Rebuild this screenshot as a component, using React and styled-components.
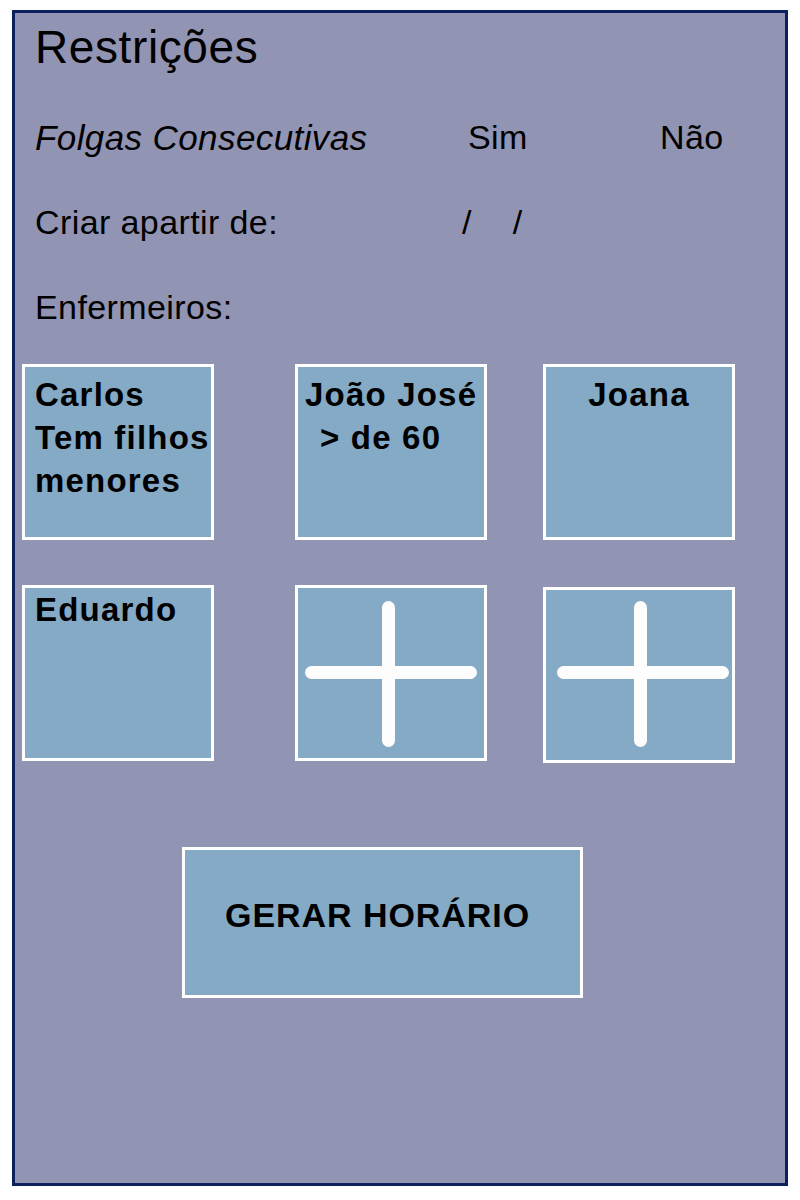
import React from 'react';
import styled, { createGlobalStyle } from 'styled-components';

const GlobalStyle = createGlobalStyle`
  body {
    margin: 0;
    background: #ffffff;
    font-family: 'Liberation Sans', Arial, sans-serif;
    color: #000000;
  }
`;

const nurses = [
  { id: 'carlos', lines: ['Carlos', 'Tem filhos', 'menores'], pad: '6px 0 0 10px' },
  { id: 'joao', lines: ['João José', '> de 60'], pad: '6px 0 0 7px', indent: true },
  { id: 'joana', lines: ['Joana'], pad: '6px 0 0 0', center: true },
  { id: 'eduardo', lines: ['Eduardo'], pad: '0 0 0 10px' },
];

const PlusIcon = ({ dx = 0, dy = 0 }) => (
  <PlusSvg viewBox="0 0 186 170">
    <g transform={`translate(${dx} ${dy})`}>
      <line x1="13.5" y1="84.5" x2="172.5" y2="84.5" />
      <line x1="90.5" y1="19.5" x2="90.5" y2="152.5" />
    </g>
  </PlusSvg>
);

const App = () => {
  return (
    <>
      <GlobalStyle />
      <Page>
        <Frame>
          <Title>Restrições</Title>

          <ChoiceRow>
            <em>Folgas Consecutivas</em>
            <span>Sim</span>
            <span>Não</span>
          </ChoiceRow>

          <DateRow>
            <span>Criar apartir de:</span>
            <DateSlots>
              <span>/</span>
              <span>/</span>
            </DateSlots>
          </DateRow>

          <Row>Enfermeiros:</Row>

          <CardGrid>
            {nurses.map((n) => (
              <Card key={n.id} $pad={n.pad} $center={n.center}>
                {n.lines.map((line, i) => (
                  <CardLine key={line} $indent={n.indent && i > 0}>
                    {line}
                  </CardLine>
                ))}
              </Card>
            ))}
            <Card>
              <PlusIcon />
            </Card>
            <Card $drop>
              <PlusIcon dx={4} dy={-2} />
            </Card>
          </CardGrid>

          <Footer>
            <GenerateButton>GERAR HORÁRIO</GenerateButton>
          </Footer>
        </Frame>
      </Page>
    </>
  );
};

export default App;

const Page = styled.div`
  padding: 10px 12px;
`;

const Frame = styled.div`
  box-sizing: border-box;
  width: 776px;
  height: 1176px;
  border: 3px solid #0b215e;
  background: #9194b2;
  padding-top: 9px;
`;

const Title = styled.h1`
  margin: 0;
  padding-left: 20px;
  height: 50px;
  line-height: 50px;
  font-size: 46px;
  font-weight: normal;
  letter-spacing: 0.6px;
`;

const Row = styled.div`
  height: 85px;
  line-height: 85px;
  padding-left: 20px;
  font-size: 34px;
  letter-spacing: 0.4px;
`;

const ChoiceRow = styled(Row)`
  margin-top: 23px;
  display: grid;
  grid-template-columns: 433px 192px auto;

  em {
    font-size: 35px;
  }
`;

const DateRow = styled(Row)`
  display: grid;
  grid-template-columns: 427px auto;
`;

const DateSlots = styled.div`
  display: flex;
  gap: 41px;
`;

const CardGrid = styled.div`
  margin-top: 14px;
  padding-left: 7px;
  display: grid;
  grid-template-columns: 273px 248px 192px;
  row-gap: 45px;
`;

const Card = styled.div`
  box-sizing: border-box;
  width: 192px;
  height: 176px;
  border: 3px solid #ffffff;
  background: #85aac6;
  padding: ${(p) => p.$pad || '0'};
  text-align: ${(p) => (p.$center ? 'center' : 'left')};
  margin-top: ${(p) => (p.$drop ? '2px' : '0')};
  margin-bottom: ${(p) => (p.$drop ? '-2px' : '0')};
  font-size: 33px;
  font-weight: bold;
  letter-spacing: 1.2px;
  line-height: 43px;
  white-space: nowrap;
  overflow: hidden;
`;

const CardLine = styled.div`
  padding-left: ${(p) => (p.$indent ? '15px' : '0')};
`;

const PlusSvg = styled.svg`
  display: block;
  width: 100%;
  height: 100%;

  line {
    stroke: #fdfdfe;
    stroke-width: 13;
    stroke-linecap: round;
  }
`;

const Footer = styled.div`
  margin-top: 86px;
  padding-left: 167px;
`;

const GenerateButton = styled.button`
  box-sizing: border-box;
  display: flex;
  align-items: flex-start;
  width: 401px;
  height: 151px;
  border: 3px solid #ffffff;
  background: #85aac6;
  padding: 45px 0 0 40px;
  text-align: left;
  font-family: 'Liberation Sans', Arial, sans-serif;
  font-size: 34px;
  font-weight: bold;
  letter-spacing: 0.95px;
  line-height: 40px;
  color: #000000;
  cursor: pointer;
`;
